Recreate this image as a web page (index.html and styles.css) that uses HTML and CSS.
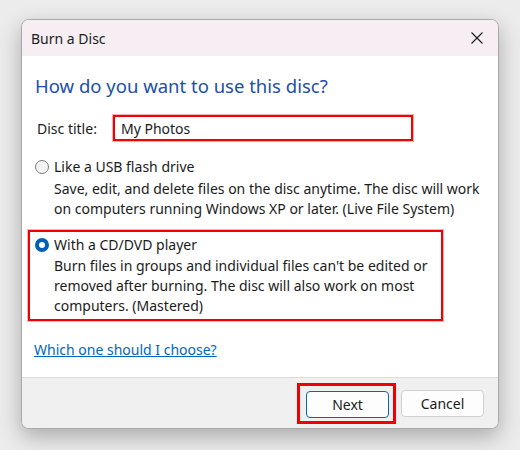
FILE: index.html
```html
<!DOCTYPE html>
<html>
<head>
<meta charset="utf-8">
<link rel="stylesheet" href="styles.css">
</head>
<body>
<div class="window">
  <div class="titlebar">
    <span class="title">Burn a Disc</span>
    <span class="close"><svg width="12" height="12" viewBox="0 0 12 12"><path d="M0.5 0.5L11.5 11.5M11.5 0.5L0.5 11.5" stroke="#1a1a1a" stroke-width="1.1" fill="none"/></svg></span>
  </div>
  <div class="content">
    <div class="heading">How do you want to use this disc?</div>
    <div class="title-row">
      <span class="label">Disc title:</span>
      <span class="input">My Photos</span>
    </div>
    <div class="option">
      <div class="opt-head"><span class="radio"></span><span>Like a USB flash drive</span></div>
      <div class="desc">
        <span class="line">Save, edit, and delete files on the disc anytime. The disc will work</span>
        <span class="line">on computers running Windows XP or later. (Live File System)</span>
      </div>
    </div>
    <div class="option highlight">
      <div class="opt-head"><span class="radio checked"></span><span>With a CD/DVD player</span></div>
      <div class="desc">
        <span class="line">Burn files in groups and individual files can't be edited or</span>
        <span class="line">removed after burning. The disc will also work on most</span>
        <span class="line">computers. (Mastered)</span>
      </div>
    </div>
    <a class="link" href="#">Which one should I choose?</a>
  </div>
  <div class="footer">
    <span class="btn-mark"><button class="btn default">Next</button></span>
    <button class="btn">Cancel</button>
  </div>
</div>
</body>
</html>
```

FILE: styles.css
```css
html, body {
  margin: 0;
  padding: 0;
}
body {
  background: #ececec;
  width: 520px;
  height: 450px;
  overflow: hidden;
  font-family: "Noto Sans", "Open Sans", sans-serif;
  font-size: 14px;
  color: #1b1b1b;
}
.window {
  box-sizing: border-box;
  margin: 19px 0 0 21px;
  width: 478px;
  height: 410px;
  border: 1px solid #a9a9a9;
  border-radius: 8px;
  overflow: hidden;
  background: #ffffff;
  box-shadow: 0 8px 22px rgba(0, 0, 0, 0.28);
  display: flex;
  flex-direction: column;
}
.titlebar {
  height: 36px;
  background: #f6eef3;
  display: flex;
  align-items: center;
  justify-content: space-between;
  padding: 0 15px 0 9px;
  flex: none;
}
.title {
  font-size: 14px;
  color: #1b1b1b;
}
.close {
  display: flex;
  width: 12px;
  height: 12px;
}
.content {
  flex: 1;
  padding: 0 0 0 13px;
  background: #ffffff;
}
.heading {
  margin-top: 16px;
  font-size: 18.5px;
  line-height: 28px;
  color: #1c4fa6;
}
.title-row {
  margin-top: 15px;
  display: flex;
  align-items: center;
  height: 26px;
}
.label {
  width: 76px;
  padding-left: 2px;
}
.input {
  box-sizing: border-box;
  width: 300px;
  height: 26px;
  border: 2px solid #f00000;
  box-shadow: 0 0 0 1px #f8b4b4;
  padding-left: 6px;
  display: flex;
  align-items: center;
}
.option {
  margin-top: 16px;
  line-height: 20px;
}
.opt-head {
  display: flex;
  align-items: center;
  height: 20px;
}
.radio {
  box-sizing: border-box;
  width: 14px;
  height: 14px;
  border-radius: 50%;
  border: 1px solid #7b7b7b;
  background: #f3f3f3;
  margin-right: 5px;
  flex: none;
}
.radio.checked {
  border: 4px solid #005fb8;
  background: #ffffff;
}
.desc {
  margin-top: 2px;
  padding-left: 19px;
}
.line {
  display: block;
  white-space: nowrap;
}
.highlight {
  box-sizing: border-box;
  margin-top: 11px;
  margin-left: -7px;
  width: 415px;
  border: 2px solid #f00000;
  box-shadow: 0 0 0 1px #f8b4b4;
  padding: 3px 5px;
}
.highlight .desc {
  margin-top: 1px;
}
.link {
  display: inline-block;
  margin-top: 19px;
  margin-left: -1px;
  line-height: 20px;
  color: #0067c0;
  text-decoration: underline;
}
.footer {
  flex: none;
  height: 51px;
  box-sizing: border-box;
  border-top: 1px solid #dcdcdc;
  background: #f0f0f0;
  display: flex;
  align-items: center;
  justify-content: flex-end;
  padding-right: 14px;
  gap: 5px;
}
.btn-mark {
  display: flex;
  border: 3px solid #f00000;
  padding: 5px 4px 3px 6px;
}
.btn {
  box-sizing: border-box;
  width: 83px;
  height: 27px;
  border: 1px solid #d0d0d0;
  border-radius: 4px;
  background: #fdfdfd;
  font-family: "Noto Sans", "Open Sans", sans-serif;
  font-size: 14px;
  color: #1b1b1b;
  padding: 0;
}
.btn.default {
  border-color: #0067c0;
}
```
